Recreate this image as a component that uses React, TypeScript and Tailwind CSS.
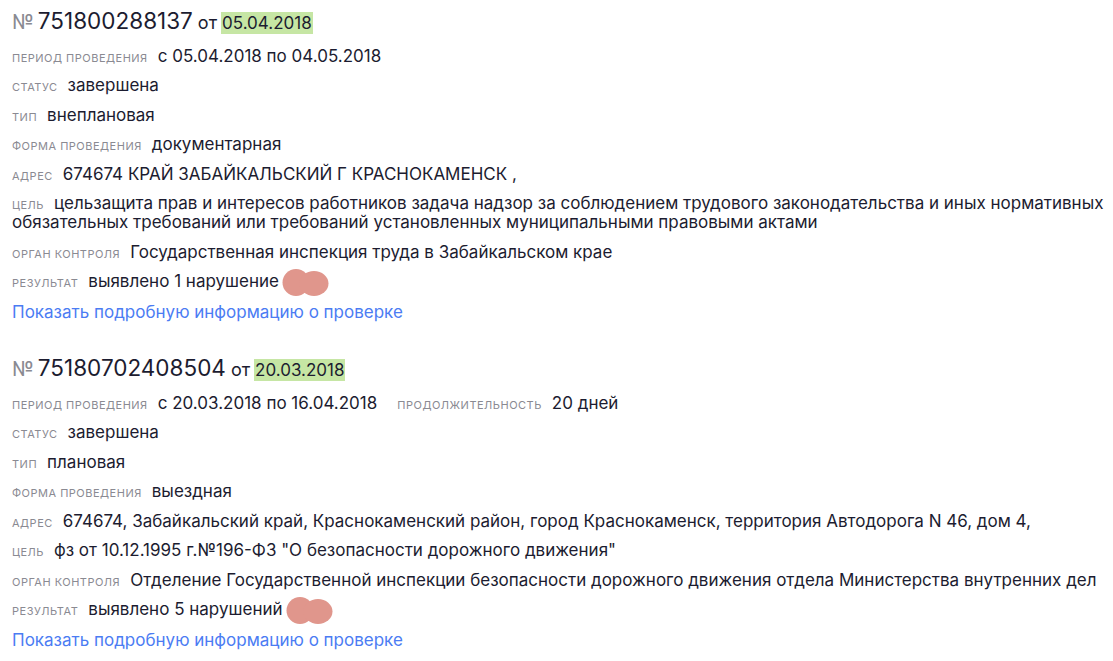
import React from 'react';

type Row = { label: string; value: string; extra?: { label: string; value: string } };

type Check = {
  num: string;
  date: string;
  rows: Row[];
  result: string;
};

const CHECKS: Check[] = [
  {
    num: '751800288137',
    date: '05.04.2018',
    rows: [
      { label: 'Период проведения', value: 'с 05.04.2018 по 04.05.2018' },
      { label: 'Статус', value: 'завершена' },
      { label: 'Тип', value: 'внеплановая' },
      { label: 'Форма проведения', value: 'документарная' },
      { label: 'Адрес', value: '674674 КРАЙ ЗАБАЙКАЛЬСКИЙ Г КРАСНОКАМЕНСК ,' },
      {
        label: 'Цель',
        value:
          'цельзащита прав и интересов работников задача надзор за соблюдением трудового законодательства и иных нормативных обязательных требований или требований установленных муниципальными правовыми актами',
      },
      { label: 'Орган контроля', value: 'Государственная инспекция труда в Забайкальском крае' },
    ],
    result: 'выявлено 1 нарушение',
  },
  {
    num: '75180702408504',
    date: '20.03.2018',
    rows: [
      {
        label: 'Период проведения',
        value: 'с 20.03.2018 по 16.04.2018',
        extra: { label: 'Продолжительность', value: '20 дней' },
      },
      { label: 'Статус', value: 'завершена' },
      { label: 'Тип', value: 'плановая' },
      { label: 'Форма проведения', value: 'выездная' },
      {
        label: 'Адрес',
        value: '674674, Забайкальский край, Краснокаменский район, город Краснокаменск, территория Автодорога N 46, дом 4,',
      },
      { label: 'Цель', value: 'фз от 10.12.1995 г.№196-ФЗ "О безопасности дорожного движения"' },
      {
        label: 'Орган контроля',
        value: 'Отделение Государственной инспекции безопасности дорожного движения отдела Министерства внутренних дел',
      },
    ],
    result: 'выявлено 5 нарушений',
  },
];

// pink smudge that hides something in the original screenshot
function Smudge() {
  return (
    <svg width="47" height="29" viewBox="0 0 47 29" className="-my-[6px] ml-[3px] inline-block align-middle">
      <ellipse cx="14" cy="14.5" rx="13.5" ry="13.5" fill="#e0968c" />
      <ellipse cx="32" cy="15.5" rx="14.5" ry="12.5" fill="#e0968c" />
    </svg>
  );
}

function Label({ children }: { children: React.ReactNode }) {
  return (
    <span className="mr-[10px] text-[11px] leading-none uppercase tracking-[0.5px] text-[#8a8a92]">{children}</span>
  );
}

function Field({ row }: { row: Row }) {
  return (
    <p className="text-[17px] leading-[19px] text-[#1c1c30]">
      <Label>{row.label}</Label>
      {row.value}
      {row.extra && (
        <>
          <span className="ml-[20px]" />
          <Label>{row.extra.label}</Label>
          {row.extra.value}
        </>
      )}
    </p>
  );
}

function CheckCard({ check }: { check: Check }) {
  return (
    <section className="flex flex-col gap-[10.5px]">
      <h2 className="flex items-baseline leading-[26px] text-[#1c1c30]">
        <span className="mr-[4px] text-[20px] text-[#8a8a92]">№</span>
        <span className="text-[22.5px]">{check.num}</span>
        <span className="ml-[5px] mr-[4px] text-[18px]">от</span>
        <span className="bg-[#c6e6a4] px-[1px] text-[17px] leading-[22px]">{check.date}</span>
      </h2>
      {check.rows.map((r) => (
        <Field key={r.label} row={r} />
      ))}
      <p className="text-[17px] leading-[19px] text-[#1c1c30]">
        <Label>Результат</Label>
        {check.result}
        <Smudge />
      </p>
      <a className="mt-[1.5px] text-[17px] leading-[19px] text-[#4b7cf3]" href="#">
        Показать подробную информацию о проверке
      </a>
    </section>
  );
}

export default function App() {
  return (
    <div
      className="h-[661px] w-[1113px] overflow-hidden bg-white"
      style={{ fontFamily: 'Inter, "Noto Sans", sans-serif' }}
    >
      <div className="flex w-[1160px] flex-col gap-[33px] pl-[12px] pt-[8px]">
        {CHECKS.map((c) => (
          <CheckCard key={c.num} check={c} />
        ))}
      </div>
    </div>
  );
}
